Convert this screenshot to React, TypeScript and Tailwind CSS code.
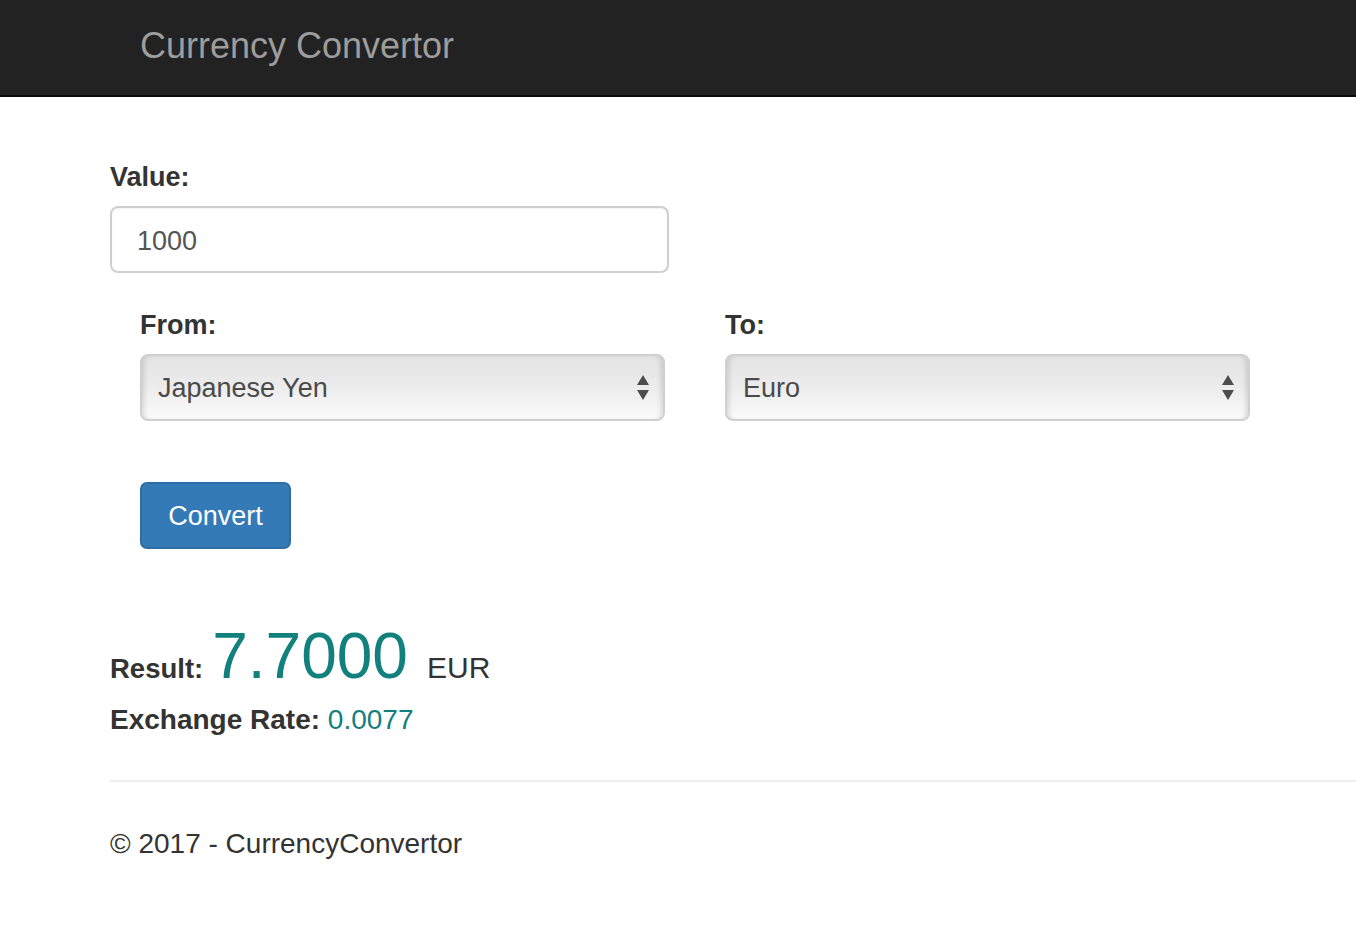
import React from "react";

function Arrows() {
  return (
    <svg width="14" height="28" viewBox="0 0 14 28" className="shrink-0">
      <path d="M7 1 L13 11 L1 11 Z" fill="#4d4d4d" />
      <path d="M1 16 L13 16 L7 26 Z" fill="#4d4d4d" />
    </svg>
  );
}

function FakeSelect({ label }: { label: string }) {
  return (
    <div className="flex h-[67px] w-[525px] items-center justify-between rounded-[8px] border-2 border-[#d0d0d0] bg-gradient-to-b from-[#e3e3e3] via-[#ececec] to-[#fbfbfb] pl-[16px] pr-[13px] text-[27px] text-[#4a4a4a] shadow-[inset_5px_0_5px_-3px_rgba(0,0,0,0.13),inset_-5px_0_5px_-3px_rgba(0,0,0,0.13)]">
      <span className="pt-[2px]">{label}</span>
      <Arrows />
    </div>
  );
}

export default function App() {
  return (
    <div className="min-h-screen bg-white font-['Liberation_Sans',Arial,sans-serif] text-[#333]">
      <nav className="h-[97px] border-b-2 border-[#080808] bg-[#222]">
        <div className="pl-[140px] pt-[28px] text-[36px] leading-[36px] text-[#9d9d9d]">
          Currency Convertor
        </div>
      </nav>

      <main className="pl-[110px]">
        <div className="mt-[61px] text-[27px] font-bold leading-[38px]">Value:</div>
        <input
          defaultValue="1000"
          readOnly
          className="mt-[10px] block h-[67px] w-[559px] rounded-[8px] border-2 border-[#cfcfcf] pl-[25px] pt-[3px] text-[27px] text-[#555] shadow-[inset_0_1px_2px_rgba(0,0,0,0.06)] outline-none"
        />

        <div className="mt-[33px] flex gap-[60px] pl-[30px]">
          <div className="w-[525px]">
            <div className="text-[27px] font-bold leading-[38px]">From:</div>
            <div className="mt-[10px]">
              <FakeSelect label="Japanese Yen" />
            </div>
          </div>
          <div className="w-[525px]">
            <div className="text-[27px] font-bold leading-[38px]">To:</div>
            <div className="mt-[10px]">
              <FakeSelect label="Euro" />
            </div>
          </div>
        </div>

        <div className="mt-[61px] pl-[30px]">
          <button className="h-[67px] w-[151px] rounded-[7px] border-2 border-[#2e6da4] bg-[#337ab7] pt-[2px] text-[27px] text-white">
            Convert
          </button>
        </div>

        <div className="mt-[75px] flex items-baseline">
          <span className="text-[27.5px] font-bold leading-none">Result:</span>
          <span className="ml-[9px] text-[64px] leading-none text-[#12807c]">7.7000</span>
          <span className="ml-[19px] text-[30px] leading-none text-[#333]">EUR</span>
        </div>

        <div className="mt-[13px] text-[28px] leading-[38px]">
          <span className="font-bold">Exchange Rate:</span>{" "}
          <span className="text-[#12807c]">0.0077</span>
        </div>

        <div className="mt-[41px] h-[2px] bg-[#eeeeee]" />

        <div className="mt-[43px] text-[28px] leading-[38px]">© 2017 - CurrencyConvertor</div>
      </main>
    </div>
  );
}
